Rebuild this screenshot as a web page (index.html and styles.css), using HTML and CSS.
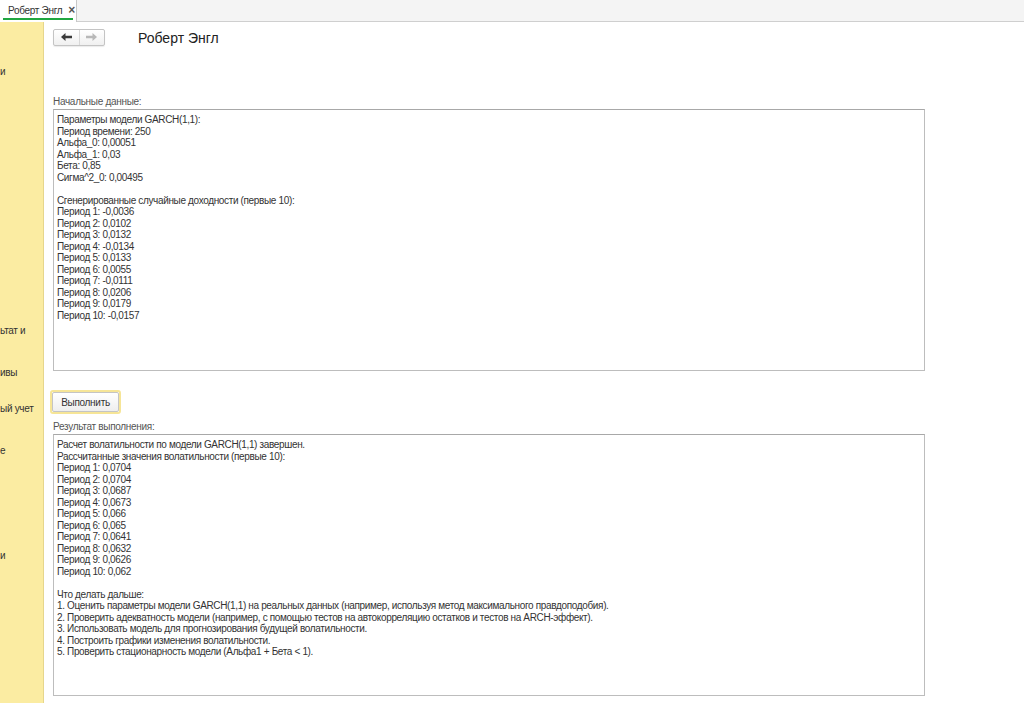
FILE: index.html
```html
<!DOCTYPE html>
<html lang="ru">
<head>
<meta charset="utf-8">
<title>Роберт Энгл</title>
<link rel="stylesheet" href="styles.css">
</head>
<body>
<div class="tabbar">
  <div class="tab"><span class="tab-title">Роберт Энгл</span><span class="tab-close">×</span></div>
</div>
<div class="main">
  <div class="sidebar">
    <div class="sb-item sb1">и</div>
    <div class="sb-item sb2">ьтат и</div>
    <div class="sb-item sb3">ивы</div>
    <div class="sb-item sb4">ый учет</div>
    <div class="sb-item sb5">е</div>
    <div class="sb-item sb6">и</div>
  </div>
  <div class="content">
    <div class="header">
      <div class="nav">
        <div class="nav-btn">
          <svg width="11" height="8" viewBox="0 0 11 8"><path d="M0 4 L4.5 0 V2.8 H11 V5.2 H4.5 V8 Z" fill="#3a3a3a"/></svg>
        </div>
        <div class="nav-btn">
          <svg width="11" height="8" viewBox="0 0 11 8"><path d="M11 4 L6.5 0 V2.8 H0 V5.2 H6.5 V8 Z" fill="#b8b8b8"/></svg>
        </div>
      </div>
      <div class="title">Роберт Энгл</div>
    </div>
    <div class="label label-first">Начальные данные:</div>
    <div class="field">Параметры модели GARCH(1,1):
Период времени: 250
Альфа_0: 0,00051
Альфа_1: 0,03
Бета: 0,85
Сигма^2_0: 0,00495

Сгенерированные случайные доходности (первые 10):
Период 1: -0,0036
Период 2: 0,0102
Период 3: 0,0132
Период 4: -0,0134
Период 5: 0,0133
Период 6: 0,0055
Период 7: -0,0111
Период 8: 0,0206
Период 9: 0,0179
Период 10: -0,0157</div>
    <div class="btn-row"><div class="btn-focus"><button class="btn">Выполнить</button></div></div>
    <div class="label label-second">Результат выполнения:</div>
    <div class="field">Расчет волатильности по модели GARCH(1,1) завершен.
Рассчитанные значения волатильности (первые 10):
Период 1: 0,0704
Период 2: 0,0704
Период 3: 0,0687
Период 4: 0,0673
Период 5: 0,066
Период 6: 0,065
Период 7: 0,0641
Период 8: 0,0632
Период 9: 0,0626
Период 10: 0,062

Что делать дальше:
1. Оценить параметры модели GARCH(1,1) на реальных данных (например, используя метод максимального правдоподобия).
2. Проверить адекватность модели (например, с помощью тестов на автокорреляцию остатков и тестов на ARCH-эффект).
3. Использовать модель для прогнозирования будущей волатильности.
4. Построить графики изменения волатильности.
5. Проверить стационарность модели (Альфа1 + Бета &lt; 1).</div>
  </div>
</div>
</body>
</html>
```

FILE: styles.css
```css
html, body {
  margin: 0;
  padding: 0;
  height: 100%;
  overflow: hidden;
  background: #ffffff;
  font-family: "Liberation Sans", Arial, sans-serif;
  color: #333333;
}

.tabbar {
  height: 22px;
  background: #f4f4f4;
  border-bottom: 1px solid #cfcfcf;
  display: flex;
  box-sizing: border-box;
}

.tab {
  width: 77px;
  height: 22px;
  box-sizing: border-box;
  background: #ffffff;
  border-right: 1px solid #c8c8c8;
  display: flex;
  align-items: center;
  padding: 0 0 0 8px;
  font-size: 10px;
  letter-spacing: -0.3px;
  white-space: nowrap;
  color: #333333;
  position: relative;
}

.tab::after {
  content: "";
  position: absolute;
  left: 3px;
  right: 3px;
  bottom: 2px;
  height: 2px;
  background: #20a640;
}

.tab-title {
  margin-top: -2px;
}

.tab-close {
  margin-left: 6px;
  margin-top: -2px;
  font-size: 12px;
  font-weight: bold;
  color: #555555;
}

.main {
  display: flex;
  height: calc(100% - 22px);
}

.sidebar {
  width: 43px;
  flex: 0 0 43px;
  background: #fbeca2;
  border-right: 1px solid #e6d68c;
  overflow: hidden;
  font-size: 10px;
  letter-spacing: -0.3px;
  color: #333333;
  display: flex;
  flex-direction: column;
}

.sb-item {
  white-space: nowrap;
  line-height: 13px;
}

.sb1 { margin-top: 43px; }
.sb2 { margin-top: 246px; }
.sb3 { margin-top: 29px; }
.sb4 { margin-top: 23px; }
.sb5 { margin-top: 29px; }
.sb6 { margin-top: 92px; }

.content {
  flex: 1;
  padding: 6px 0 0 9px;
  display: flex;
  flex-direction: column;
}

.header {
  display: flex;
  align-items: center;
  height: 18px;
}

.nav {
  display: flex;
  width: 52px;
  height: 17px;
  box-sizing: border-box;
  border: 1px solid #c4c4c4;
  border-radius: 2px;
  background: linear-gradient(#ffffff, #f0f0f0);
  box-shadow: 0 1px 1px rgba(0,0,0,0.08);
}

.nav-btn {
  flex: 1;
  display: flex;
  align-items: center;
  justify-content: center;
}

.nav-btn + .nav-btn {
  border-left: 1px solid #d8d8d8;
}

.title {
  margin-left: 33px;
  font-size: 14px;
  color: #222222;
  margin-top: 1px;
}

.label {
  font-size: 10px;
  letter-spacing: -0.3px;
  color: #555555;
  line-height: 13px;
  height: 13px;
}

.label-first {
  margin-top: 49px;
}

.label-second {
  margin-top: 6px;
}

.field {
  width: 872px;
  height: 262px;
  box-sizing: border-box;
  border: 1px solid #bdbdbd;
  border-top-color: #a8a8a8;
  margin-top: 1px;
  padding: 4px 3px;
  font-size: 10px;
  letter-spacing: -0.35px;
  line-height: 11.5px;
  color: #333333;
  white-space: pre-wrap;
  overflow: hidden;
}

.btn-row {
  margin-top: 19px;
  display: flex;
}

.btn-focus {
  border: 2px solid #f6e597;
  border-radius: 3px;
  margin-left: -3px;
  padding: 0;
}

.btn {
  width: 67px;
  height: 20px;
  margin: 0;
  box-sizing: border-box;
  border: 1px solid #c4c4c4;
  border-radius: 2px;
  background: linear-gradient(#ffffff, #eeeeee);
  font-family: "Liberation Sans", Arial, sans-serif;
  font-size: 10px;
  letter-spacing: -0.3px;
  color: #333333;
  padding: 0;
  display: block;
}
```
